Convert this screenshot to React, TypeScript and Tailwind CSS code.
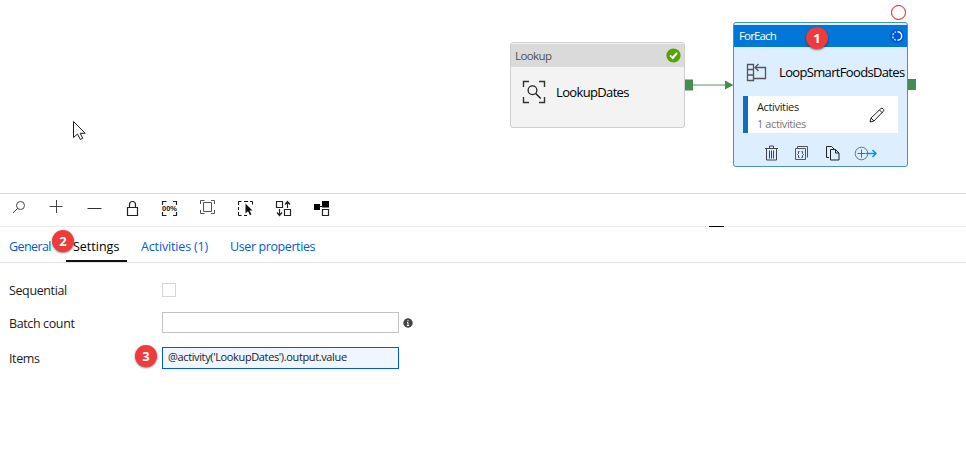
import type { ReactNode } from "react";

function Marker({ n, className }: { n: number; className: string }) {
  return (
    <span
      className={`absolute flex size-[22px] items-center justify-center rounded-full bg-[#ef3b3b] font-['Noto_Sans',sans-serif] text-[13px] leading-none font-bold tracking-normal text-white shadow-[0_1px_2px_rgba(0,0,0,0.5)] ${className}`}
    >
      {n}
    </span>
  );
}

function Icon({ box, className = "size-5", children }: { box: string; className?: string; children: ReactNode }) {
  return (
    <svg viewBox={box} className={`block shrink-0 ${className}`} fill="none" stroke="#222" strokeWidth="1">
      {children}
    </svg>
  );
}

function LookupNode() {
  return (
    <div className="absolute top-[42px] left-[510px] h-[86px] w-[175px] rounded-[3px] border border-[#cfcfcf] bg-[#f3f3f3] pt-px">
      <div className="flex h-[23px] items-center justify-between bg-[#dadada] pr-[3px] pl-[4px]">
        <span className="text-[11.5px] tracking-[-0.6px] text-[#505050]">Lookup</span>
        <Icon box="0 0 15 15" className="size-[15px]">
          <circle cx="7.5" cy="7.5" r="7.1" fill="#57a300" stroke="none" />
          <path d="M4 7.4 6.6 10 11 5" stroke="#fff" strokeWidth="2" />
        </Icon>
      </div>
      <div className="flex h-[50px] items-center pl-[11px]">
        <Icon box="0 0 24 24" className="size-6">
          <path d="M1.5 7V1.5H7M17 1.5h5.500V7M1.500 17v5.500H7M17 22.500h5.500V17" stroke="#333" strokeWidth="1.400" />
          <circle cx="10.500" cy="10.300" r="4.400" stroke="#222" strokeWidth="1.300" />
          <path d="m13.700 13.500 5 5" stroke="#222" strokeWidth="1.500" />
        </Icon>
        <span className="mt-[2px] ml-[10px] text-[13px] tracking-[-0.65px]">LookupDates</span>
      </div>
    </div>
  );
}

function ForEachNode() {
  return (
    <div className="absolute top-[22px] left-[733px] h-[145px] w-[175px] rounded-[3px] border border-[#4794b3] bg-[#dceeff] pt-[2px]">
      <div className="flex h-[22px] items-center justify-between bg-[#0277d7] pr-[3px] pl-[5px]">
        <span className="text-[11.5px] tracking-[-0.85px] text-white">ForEach</span>
        <Icon box="0 0 14 14" className="size-[14px]">
          <circle cx="7" cy="7" r="7" fill="#0058dc" stroke="none" />
          <path d="M7.500 2.800A4.200 4.200 0 0 1 7.500 11.200" stroke="#fff" strokeWidth="1.400" />
          <path d="M6 11.100A4.200 4.200 0 0 1 6 2.900" stroke="#cfe2ff" strokeWidth="1.400" strokeDasharray="2 1.200" />
        </Icon>
      </div>
      <div className="flex h-[49px] items-center pl-[12px]">
        <Icon box="746 61 22 22" className="size-[22px]">
          <path d="M747.500 64.500h6v16h-6zM747.500 69.500h6M747.500 75h6M760 67.500h5.500v11H754M756 67.500h6" stroke="#555" strokeWidth="1.300" />
          <path d="m758.500 64-3.500 3.500 3.500 3.500" stroke="#555" strokeWidth="1.300" />
        </Icon>
        <span className="mt-[2px] ml-[11px] text-[13px] tracking-[-0.66px] whitespace-nowrap">LoopSmartFoodsDates</span>
      </div>
      <div className="ml-[9px] flex h-[37px] w-[155px] items-center border-l-[5px] border-[#106ebe] bg-white pr-[13px] pl-[9px]">
        <div className="flex-1 text-[11px] leading-[17px]">
          <div className="tracking-[-0.35px] text-[#222]">Activities</div>
          <div className="tracking-[-0.4px] text-[#777]">1 activities</div>
        </div>
        <Icon box="0 0 16 16" className="size-4">
          <path d="m1 15 1-4L12 1.500q1-.8 2 .2l.5.5q.8 1 0 1.800L5 14zM2 11l3 3M10.500 3l3 3" />
        </Icon>
      </div>
      <div className="flex pt-[10px] pl-[29px]">
        <Icon box="763 143 30 20" className="h-5 w-[30px]">
          <path d="M765 148.500h13M769.500 148v-2h4v2M766.500 149v11h10v-11M769.500 150.500v8M771.500 150.500v8M773.500 150.500v8" stroke="#444" />
        </Icon>
        <Icon box="793 143 30 20" className="h-5 w-[30px]">
          <path d="M797.500 146.500h10v11M795.500 148.500h10v11h-10zM797.500 146.500v2" stroke="#555" />
          <path d="M799.500 151.500h-1v2l-1 1 1 1v2h1M801.500 151.500h1v2l1 1-1 1v2h-1" stroke="#333" strokeWidth=".9" />
        </Icon>
        <Icon box="823 143 30 20" className="h-5 w-[30px]">
          <path d="M829 157.500h-2.500v-11h5l2.500 2.500" />
          <path d="M830.500 149.500h5l3.500 3.500v7h-8.500zM835.500 149.500v3.500h3.500" />
        </Icon>
        <Icon box="853 143 30 20" className="h-5 w-[30px]">
          <circle cx="861.500" cy="153.500" r="6.300" stroke="#61788c" />
          <path d="M857.500 153.500h8M861.500 149.500v8" stroke="#526577" />
          <path d="M866 153.500h10M872.500 150l3.500 3.500-3.500 3.500" stroke="#009ad2" strokeWidth="1.500" />
        </Icon>
      </div>
    </div>
  );
}

function Toolbar() {
  return (
    <div className="relative flex h-[33px] gap-[18px] border-b border-[#ebebeb] pt-[4px] pl-[9px]">
      <Icon box="9 198 20 20">
        <circle cx="20.500" cy="205.500" r="4" stroke="#444" />
        <path d="m17.500 208.500-4.500 4.500" stroke="#444" />
      </Icon>
      <Icon box="47 198 20 20">
        <path d="M49.500 206.500h13M56.500 200v13" stroke="#444" />
      </Icon>
      <Icon box="85 198 20 20">
        <path d="M87.500 208.500h14" stroke="#333" />
      </Icon>
      <Icon box="123 198 20 20">
        <path d="M127.500 207.500h10v8h-10zM129.500 207.500v-3q0-3 3-3t3 3v3" strokeWidth="1.200" />
      </Icon>
      <Icon box="161 198 20 20">
        <path d="M162.500 205v-3.500h4M173 201.500h3.500v3.500M162.500 212v3.500h4M173 215.500h3.500v-3.500" strokeWidth="1.200" />
        <text x="162" y="211.300" textLength="15" lengthAdjust="spacingAndGlyphs" fill="#111" stroke="none" className="font-['Liberation_Sans',sans-serif] text-[7px] font-bold">00%</text>
      </Icon>
      <Icon box="199 198 20 20">
        <path d="M200.500 204v-3.500h4M211 200.500h3.500v3.500M200.500 210v3.500h4M211 213.500h3.500v-3.500M203.500 202.500h8v9h-8z" stroke="#555" />
      </Icon>
      <Icon box="237 198 20 20">
        <path d="M238.500 205v-3.500h3M244 201.500h4M250 201.500h2.500v3M238.500 207v3M238.500 212v3.500h3M244 215.500h3" stroke="#111" />
        <path d="m245.500 203.500 7 7h-3l2 4-1.500.8-2-4-2.500 2z" fill="#111" stroke="none" />
      </Icon>
      <Icon box="275 198 20 20">
        <path d="M276.500 201.500h6v6h-6zM284.500 209.500h6v6h-6zM287.500 208v-6M285 204.500l2.500-3 2.500 3M279.500 209v6M277 212.500l2.500 3 2.500-3" strokeWidth="1.200" />
      </Icon>
      <Icon box="313 198 20 20">
        <path d="M314 204h6v6h-6zM322 201h7v6.500h-7z" fill="#000" stroke="none" />
        <path d="M319 206.500h4M322.500 209.500h6v6h-6z" strokeWidth="1.200" />
      </Icon>
      <span className="absolute top-[32px] left-[709px] h-px w-[15px] bg-black" />
    </div>
  );
}

export default function App() {
  return (
    <main className="flex h-[470px] w-[966px] flex-col overflow-hidden bg-white font-['Open_Sans',sans-serif] text-black">
      <section className="relative h-[194px] shrink-0 border-b border-[#dadada]">
        <LookupNode />
        <svg className="absolute top-[76px] left-[685px] h-[18px] w-[48px]" viewBox="685 76 48 18">
          <path d="M685 79.500h8v11h-8zM725 80.500l8.500 4.500-8.500 4.500z" fill="#458c50" />
          <path d="M693 85h33" stroke="#579765" />
        </svg>
        <ForEachNode />
        <span className="absolute top-[79px] left-[908px] h-[11px] w-2 bg-[#458c50]" />
        <span className="absolute top-[5px] left-[891px] size-[15px] rounded-full border border-[#f00]" />
        <Marker n={1} className="top-[27px] left-[806px]" />
        <svg className="absolute top-[120px] left-[72px] h-[22px] w-[16px]" viewBox="0 0 16 22">
          <path d="M1.500 1.500v16l4-3.500 2.800 5.500 2.400-1.200-2.500-5h5z" fill="#fff" stroke="#1d1d2b" />
        </svg>
      </section>
      <Toolbar />
      <nav className="relative flex h-[36px] border-b border-[#e2e2e2] pl-[9px] text-[12.500px] leading-[39px] text-[#015cda]">
        <span className="w-[57px] tracking-[-0.6px]">General</span>
        <span className="h-[35px] w-[61px] border-b-2 border-[#111] pl-[7px] text-black">Settings</span>
        <span className="w-[103px] pl-[14px] tracking-[-0.15px]">Activities (1)</span>
        <span className="tracking-[-0.4px]">User properties</span>
        <Marker n={2} className="top-[3px] left-[52px]" />
      </nav>
      <form className="flex flex-col pt-[16px] pl-[9px] text-[12.500px] tracking-[-0.38px] text-[#222]">
        <div className="flex h-[22px] items-center">
          <span className="w-[153px] pt-[2px]">Sequential</span>
          <span className="size-[14px] border border-[#d6d6d6]" />
        </div>
        <div className="mt-[11px] flex h-[23px] items-center">
          <span className="w-[153px] pt-px">Batch count</span>
          <span className="mb-[2px] h-[21px] w-[237px] border border-[#c3c3c3]" />
          <svg viewBox="0 0 10 10" className="mb-[2px] ml-[4px] size-[10px]">
            <circle cx="5" cy="5" r="4.700" fill="#444" />
            <path d="M5 2v1.300M4 4.500h1v3M3.800 7.500h2.400" stroke="#fff" fill="none" />
          </svg>
        </div>
        <div className="relative mt-[12px] flex h-[22px] items-center">
          <span className="w-[153px] pt-[2px]">Items</span>
          <span className="flex h-[22px] w-[237px] items-center border border-[#015cda] bg-[#eff6ff] pb-[2px] pl-[5px] text-[11px] tracking-[-0.37px]">
            @activity('LookupDates').output.value
          </span>
          <Marker n={3} className="top-[-2px] left-[126px]" />
        </div>
      </form>
    </main>
  );
}
